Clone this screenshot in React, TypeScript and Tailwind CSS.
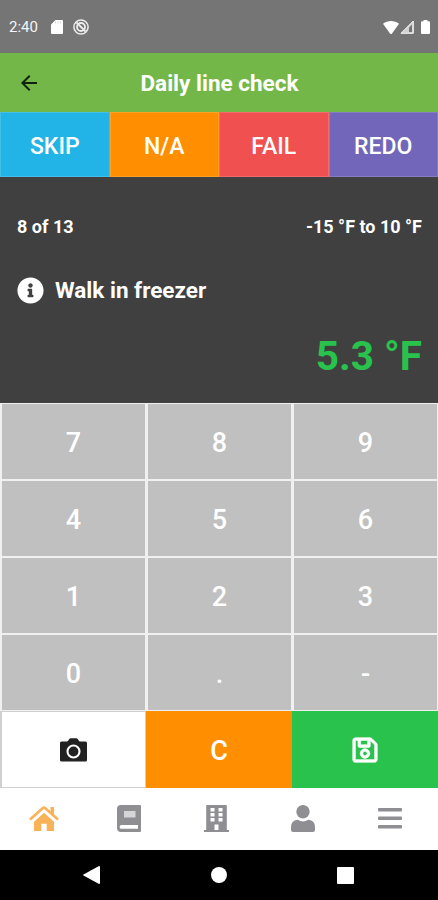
import React from "react";
import { FaInfoCircle, FaRegSave } from "react-icons/fa";
import { MdArrowBack } from "react-icons/md";

const actions = [
  { title: "SKIP", className: "bg-[#22b4e6]" },
  { title: "N/A", className: "bg-[#ff8f00]" },
  { title: "FAIL", className: "bg-[#f05050]" },
  { title: "REDO", className: "bg-[#7266ba]" },
];

const keys = ["7", "8", "9", "4", "5", "6", "1", "2", "3", "0", ".", "-"];

const StatusBar = () => (
  <div className="flex h-[53px] items-center bg-[#757575] pl-[9px] pr-[8px] pt-px text-white">
    <span className="w-[42px] pt-px text-[15px] text-gray-100">2:40</span>
    <svg width="12" height="14" viewBox="0 0 12 14" fill="currentColor">
      <path d="M4.5 0H11a1 1 0 0 1 1 1v12a1 1 0 0 1-1 1H1a1 1 0 0 1-1-1V4.5z" />
      <path d="M4.5 1.500v2M7 1.500v2M9.5 1.500v2" stroke="#d0d0d0" strokeWidth="0.9" />
    </svg>
    <svg className="ml-[10px]" width="16" height="16" viewBox="0 0 16 16" fill="none" stroke="#ececec">
      <circle cx="8" cy="8" r="7.100" strokeWidth="1.500" />
      <circle cx="8" cy="8" r="4" strokeWidth="1.800" />
      <path d="M3.500 3.500l9 9" strokeWidth="1.800" />
    </svg>
    <svg className="ml-auto" width="16" height="13" viewBox="0 0 16 13" fill="currentColor">
      <path d="M0 2.8C4.6-.9 11.4-.9 16 2.8L9 12.400q-1 1.200-2 0z" />
    </svg>
    <svg className="ml-[1px]" width="14" height="14" viewBox="0 0 14 14">
      <path d="M13.3 1v12.3H1z" fill="#d2d2d2" stroke="#f4f4f4" strokeWidth="1" />
      <path d="M9 7.500L12 4.500V12H9z" fill="#757575" />
    </svg>
    <svg className="ml-[7px]" width="9" height="14" viewBox="0 0 9 14" fill="currentColor">
      <path d="M2.500 0h4v1.300H8a1 1 0 0 1 1 1V13a1 1 0 0 1-1 1H1a1 1 0 0 1-1-1V2.300a1 1 0 0 1 1-1h1.500z" />
    </svg>
  </div>
);

const CameraIcon = () => (
  <svg width="27" height="24" viewBox="0 0 27 24">
    <path
      d="M1.500 3.500h5.500Q8.300 3.300 8.700 1.800 9.200.3 10.700.3h5.600q1.500 0 2 1.500.4 1.500 1.700 1.700h5.500a1.500 1.500 0 0 1 1.500 1.500v17a1.500 1.500 0 0 1-1.500 1.500h-24A1.500 1.500 0 0 1 0 22V5a1.500 1.500 0 0 1 1.500-1.500z"
      fill="#222"
    />
    <circle cx="13.500" cy="13.500" r="6" fill="none" stroke="white" strokeWidth="2.100" />
  </svg>
);

const HomeIcon = () => (
  <svg width="30" height="25" viewBox="0 0 30 25" fill="#f9b258">
    <path d="M21.500 1H25v8l-3.500-3z" />
    <path d="M1 13.500L13.700 2.200q1.300-1.100 2.600 0L29 13.500" fill="none" stroke="#f9b258" strokeWidth="2.600" />
    <path d="M15 6.800l10 8.900V25h-7.300v-7.200h-5.400V25H5v-9.300z" />
  </svg>
);

const BookIcon = () => (
  <svg width="24" height="27" viewBox="0 0 24 27" fill="#8e8e93">
    <path fillRule="evenodd" d="M4 0h19q1 0 1 1v25q0 1-1 1H4a4 4 0 0 1-4-4V4a4 4 0 0 1 4-4zM4.500 20a1.900 1.900 0 0 0 0 3.800H21V20z" />
    <path d="M7 6h11.500v6.500H7z" fill="#d5d5d8" />
  </svg>
);

const BuildingIcon = () => (
  <svg width="25" height="27" viewBox="0 0 25 27">
    <path d="M3 0h19q.8 0 .8.8V25H25v2H0v-2h2.200V.8Q2.200 0 3 0z" fill="#8e8e93" />
    <path
      d="M6.500 3h4v3.500h-4zM6.500 8h4v3.500h-4zM6.500 13h4v3.500h-4zM14.500 3h4v3.500h-4zM14.500 8h4v3.500h-4zM14.500 13h4v3.500h-4zM10.500 19.500h4V25h-4z"
      fill="white"
    />
  </svg>
);

const UserIcon = () => (
  <svg width="24" height="27" viewBox="0 0 24 27" fill="#8e8e93">
    <circle cx="12" cy="6.700" r="6.700" />
    <path d="M6.500 14.800Q12 18 17.500 14.800 24 15.500 24 22v3a2 2 0 0 1-2 2H2a2 2 0 0 1-2-2v-3q0-6.500 6.500-7.200z" />
  </svg>
);

const MenuIcon = () => (
  <svg width="24" height="21" viewBox="0 0 24 21" fill="#8e8e93">
    <rect width="24" height="3.500" rx="1" />
    <rect y="8.500" width="24" height="3.500" rx="1" />
    <rect y="17" width="24" height="3.500" rx="1" />
  </svg>
);

const App = () => {
  return (
    <div className="flex h-[900px] w-[438px] flex-col overflow-hidden bg-white font-[Roboto,sans-serif]">
      <StatusBar />
      <div className="flex h-[59px] items-center bg-[#74b749] px-[17px]">
        <MdArrowBack className="h-6 w-6 text-[#10230a]" />
        <h1 className="flex-1 pr-[23px] pt-[2px] text-center text-[22.500px] font-bold text-white">Daily line check</h1>
      </div>
      <div className="grid h-[65px] grid-cols-4">
        {actions.map((action) => (
          <button
            key={action.title}
            className={`border border-white/15 pt-[5px] text-[23px] font-medium text-white ${action.className}`}
          >
            {action.title}
          </button>
        ))}
      </div>
      <div className="flex h-[226px] flex-col bg-[#404040] pl-[17px] pr-[16px] font-bold text-white">
        <div className="flex justify-between pt-[36px] text-[18px] leading-[28px]">
          <span>8 of 13</span>
          <span>-15 °F to 10 °F</span>
        </div>
        <div className="mt-[33px] flex items-center text-[22.500px] leading-[32px]">
          <FaInfoCircle className="mr-[11px] h-[27px] w-[27px]" />
          Walk in freezer
        </div>
        <div className="mt-[25px] text-right text-[40.500px] leading-[50px] text-[#28c24c]">5.3 °F</div>
      </div>
      <div className="grid h-[385px] grid-cols-3 grid-rows-5 text-[27px] font-medium text-white">
        {keys.map((key) => (
          <button
            key={key}
            className="border-y border-l-2 border-r border-[#f0f0f0] bg-[#c0c0c0] pt-[4px]"
          >
            {key}
          </button>
        ))}
        <button className="flex items-center justify-center border border-l-2 border-[#d0d0d0] bg-white">
          <CameraIcon />
        </button>
        <button className="bg-[#ff8f00] pt-[4px]">C</button>
        <button className="flex items-center justify-center bg-[#28c24c]">
          <FaRegSave className="h-7 w-7 stroke-white stroke-[12px]" />
        </button>
      </div>
      <div className="flex h-[62px] items-center justify-between pb-px pl-[29px] pr-[36px]">
        <div className="-mr-[5px]">
          <HomeIcon />
        </div>
        <BookIcon />
        <BuildingIcon />
        <UserIcon />
        <MenuIcon />
      </div>
      <div className="flex h-[50px] items-center justify-between bg-black pl-[83px] pr-[84px]">
        <svg width="17" height="18" viewBox="0 0 17 18" fill="white">
          <path d="M16 0q1 0 1 1v16q0 1-1 1L.5 9.500q-.7-.5 0-1z" />
        </svg>
        <span className="h-4 w-4 rounded-full bg-white" />
        <span className="h-[17px] w-[17px] rounded-[1px] bg-white" />
      </div>
    </div>
  );
};

export default App;
